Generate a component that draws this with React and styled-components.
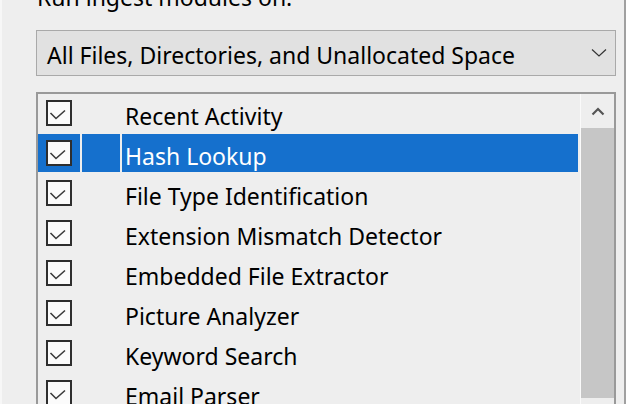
import React from "react";
import styled, { createGlobalStyle } from "styled-components";

const Global = createGlobalStyle`
  html, body { margin: 0; padding: 0; background: #eeeeee; }
  body { font-family: "Noto Sans", "Open Sans", sans-serif; }
`;

const Panel = styled.div`
  width: 626px;
  height: 404px;
  box-sizing: border-box;
  overflow: hidden;
  background: #eeeeee;
  border-left: 2px solid #f7f7f7;
  border-right: 2px solid #a0a0a0;
  padding: 0 8px 0 34px;
  display: flex;
  flex-direction: column;
`;

const Label = styled.div`
  flex-shrink: 0;
  margin-top: -19px;
  height: 32px;
  line-height: 32px;
  font-size: 23px;
  color: #000;
  padding-left: 1px;
  margin-bottom: 17px;
`;

const Select = styled.div`
  flex-shrink: 0;
  height: 46px;
  box-sizing: border-box;
  border: 1px solid #a9a9a9;
  background: #e1e1e1;
  display: flex;
  align-items: center;
  justify-content: space-between;
  padding: 0 8px 0 10px;
  font-size: 23px;
  color: #000;
`;

const SelectText = styled.span`
  padding-top: 4px;
`;

const ListBox = styled.div`
  margin-top: 16px;
  flex: 1;
  min-height: 0;
  overflow: hidden;
  box-sizing: border-box;
  border: 2px solid #999999;
  border-bottom: none;
  display: flex;
  background: #eeeeee;
`;

const Rows = styled.div`
  width: 540px;
  display: flex;
  flex-direction: column;
  gap: 2px;
`;

const Row = styled.div`
  flex-shrink: 0;
  height: 38px;
  display: grid;
  grid-template-columns: 42px 38px 1fr;
  column-gap: 2px;
`;

const Cell = styled.div`
  display: flex;
  align-items: center;
  background: ${(p) => (p.$selected ? "#1570cd" : "transparent")};
  color: ${(p) => (p.$selected ? "#ffffff" : "#000000")};
  font-size: 23px;
  padding-left: ${(p) => p.$pad || 0}px;
  white-space: nowrap;
`;

const Name = styled.span`
  padding-top: 5px;
`;

const Box = styled.div`
  width: 26px;
  height: 26px;
  box-sizing: border-box;
  border: 2px solid #2e2e2e;
  background: #fbfbfb;
  display: flex;
`;

const Scrollbar = styled.div`
  margin-left: 2px;
  width: 34px;
  box-sizing: border-box;
  border-left: 1px solid #fafafa;
  display: flex;
  flex-direction: column;
  background: #eeeeee;
`;

const ScrollButton = styled.div`
  flex-shrink: 0;
  height: 34px;
  display: flex;
  align-items: center;
  justify-content: center;
`;

const Thumb = styled.div`
  flex-shrink: 0;
  height: 270px;
  background: #c6c6c6;
`;

const items = [
  "Recent Activity",
  "Hash Lookup",
  "File Type Identification",
  "Extension Mismatch Detector",
  "Embedded File Extractor",
  "Picture Analyzer",
  "Keyword Search",
  "Email Parser",
];

const Check = () => (
  <Box>
    <svg width="22" height="22" viewBox="0 0 22 22">
      <polyline points="2.5,11 8,16.5 17,8.5" fill="none" stroke="#3a3a3a" strokeWidth="1.6" />
    </svg>
  </Box>
);

export default function App() {
  return (
    <>
      <Global />
      <Panel>
        <Label>Run ingest modules on:</Label>
        <Select>
          <SelectText>All Files, Directories, and Unallocated Space</SelectText>
          <svg width="16" height="10" viewBox="0 0 16 10">
            <polyline points="1,1.5 8,8 15,1.5" fill="none" stroke="#333" strokeWidth="1.2" />
          </svg>
        </Select>
        <ListBox>
          <Rows>
            {items.map((name, i) => {
              const sel = i === 1;
              return (
                <Row key={name}>
                  <Cell $selected={sel} $pad={8}>
                    <Check />
                  </Cell>
                  <Cell $selected={sel} />
                  <Cell $selected={sel} $pad={3}>
                    <Name>{name}</Name>
                  </Cell>
                </Row>
              );
            })}
          </Rows>
          <Scrollbar>
            <ScrollButton>
              <svg width="14" height="9" viewBox="0 0 14 9">
                <polyline points="1.5,7.5 7,2 12.5,7.5" fill="none" stroke="#555" strokeWidth="2.2" />
              </svg>
            </ScrollButton>
            <Thumb />
          </Scrollbar>
        </ListBox>
      </Panel>
    </>
  );
}
